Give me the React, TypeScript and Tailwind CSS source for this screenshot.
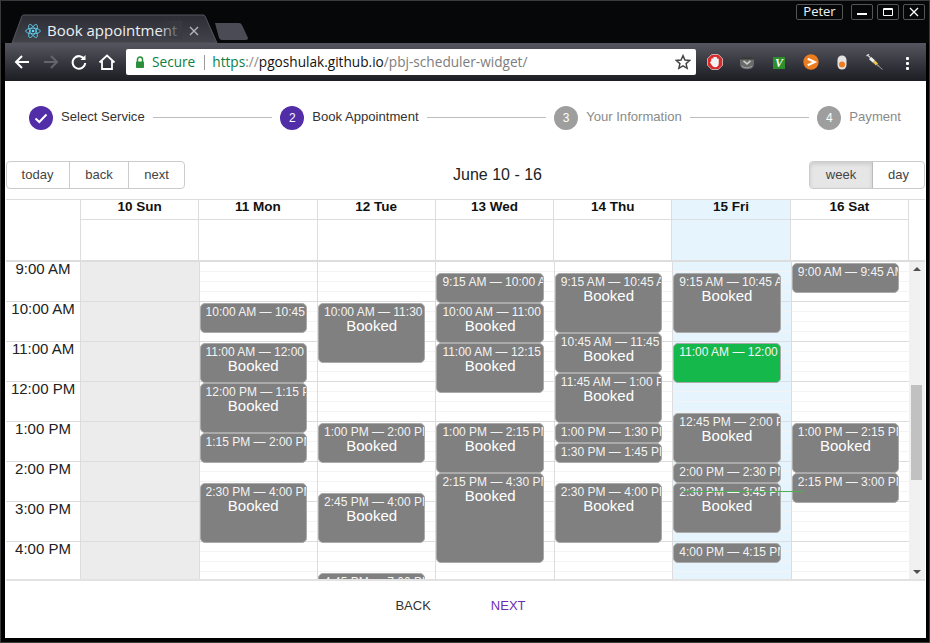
import React from "react";

type Ev = { s: number; e: number; t: string; green?: boolean };

const days: { name: string; events: Ev[]; cell: string; head: string }[] = [
  { name: "10 Sun", cell: "bg-[#ececec]", head: "", events: [] },
  {
    name: "11 Mon", cell: "", head: "",
    events: [
      { s: 10, e: 10.75, t: "10:00 AM — 10:45 AM" },
      { s: 11, e: 12, t: "11:00 AM — 12:00 PM" },
      { s: 12, e: 13.25, t: "12:00 PM — 1:15 PM" },
      { s: 13.25, e: 14, t: "1:15 PM — 2:00 PM" },
      { s: 14.5, e: 16, t: "2:30 PM — 4:00 PM" },
    ],
  },
  {
    name: "12 Tue", cell: "", head: "",
    events: [
      { s: 10, e: 11.5, t: "10:00 AM — 11:30 AM" },
      { s: 13, e: 14, t: "1:00 PM — 2:00 PM" },
      { s: 14.75, e: 16, t: "2:45 PM — 4:00 PM" },
      { s: 16.75, e: 19, t: "4:45 PM — 7:00 PM" },
    ],
  },
  {
    name: "13 Wed", cell: "", head: "",
    events: [
      { s: 9.25, e: 10, t: "9:15 AM — 10:00 AM" },
      { s: 10, e: 11, t: "10:00 AM — 11:00 AM" },
      { s: 11, e: 12.25, t: "11:00 AM — 12:15 PM" },
      { s: 13, e: 14.25, t: "1:00 PM — 2:15 PM" },
      { s: 14.25, e: 16.5, t: "2:15 PM — 4:30 PM" },
    ],
  },
  {
    name: "14 Thu", cell: "", head: "",
    events: [
      { s: 9.25, e: 10.75, t: "9:15 AM — 10:45 AM" },
      { s: 10.75, e: 11.75, t: "10:45 AM — 11:45 AM" },
      { s: 11.75, e: 13, t: "11:45 AM — 1:00 PM" },
      { s: 13, e: 13.5, t: "1:00 PM — 1:30 PM" },
      { s: 13.5, e: 14, t: "1:30 PM — 1:45 PM" },
      { s: 14.5, e: 16, t: "2:30 PM — 4:00 PM" },
    ],
  },
  {
    name: "15 Fri", cell: "bg-[#e6f4fe]", head: "bg-[#e6f4fe]",
    events: [
      { s: 9.25, e: 10.75, t: "9:15 AM — 10:45 AM" },
      { s: 11, e: 12, t: "11:00 AM — 12:00 PM", green: true },
      { s: 12.75, e: 14, t: "12:45 PM — 2:00 PM" },
      { s: 14, e: 14.5, t: "2:00 PM — 2:30 PM" },
      { s: 14.5, e: 15.75, t: "2:30 PM — 3:45 PM" },
      { s: 16, e: 16.5, t: "4:00 PM — 4:15 PM" },
    ],
  },
  {
    name: "16 Sat", cell: "", head: "",
    events: [
      { s: 9, e: 9.75, t: "9:00 AM — 9:45 AM" },
      { s: 13, e: 14.25, t: "1:00 PM — 2:15 PM" },
      { s: 14.25, e: 15, t: "2:15 PM — 3:00 PM" },
    ],
  },
];

const hours = ["9:00 AM", "10:00 AM", "11:00 AM", "12:00 PM", "1:00 PM", "2:00 PM", "3:00 PM", "4:00 PM"];

function ReactLogo() {
  return (
    <svg width="16" height="16" viewBox="-12 -12 24 24" fill="none" stroke="#61dafb" strokeWidth="1.2">
      <circle r="2" fill="#61dafb" stroke="none" />
      <ellipse rx="11" ry="4.2" />
      <ellipse rx="11" ry="4.2" transform="rotate(60)" />
      <ellipse rx="11" ry="4.2" transform="rotate(120)" />
    </svg>
  );
}

function Step({ n, label, state }: { n: string; label: string; state: "done" | "active" | "idle" }) {
  return (
    <div className="flex items-center shrink-0">
      <div
        className={
          state === "idle"
            ? "w-6 h-6 rounded-full bg-[#9e9e9e] text-white text-[12px] flex items-center justify-center"
            : "w-6 h-6 rounded-full bg-[#512da8] text-white text-[12px] flex items-center justify-center"
        }
      >
        {state === "done" ? (
          <svg width="16" height="16" viewBox="0 0 16 16" fill="none" stroke="white" strokeWidth="2">
            <path d="M2.5 8.5 L6.3 12 L13.5 4.5" />
          </svg>
        ) : (
          n
        )}
      </div>
      <span className={state === "idle" ? "ml-2 -mt-[1px] text-[13.1px] text-[#8a8a8a]" : "ml-2 -mt-[1px] text-[13.1px] text-[#333]"}>{label}</span>
    </div>
  );
}

function Line() {
  return <div className="flex-1 mx-2 h-px bg-[#bdbdbd]" />;
}

function WinBtn({ children }: { children: React.ReactNode }) {
  return (
    <div className="w-[22px] h-[16px] border border-[#555] rounded-[2px] flex items-center justify-center">{children}</div>
  );
}

function Event({ ev }: { ev: Ev }) {
  const top = (ev.s - 9) * 40 + 1;
  const height = (ev.e - ev.s) * 40;
  return (
    <div
      style={{ top, height }}
      className={
        ev.green
          ? "absolute left-0 right-[10px] z-10 overflow-hidden rounded-[5px] border border-[#aaa] bg-[#14b84b] pl-[5px] pr-0 text-center text-white"
          : "absolute left-0 right-[10px] z-10 overflow-hidden rounded-[5px] border border-[#aaa] bg-[#808080] pl-[5px] pr-0 text-center text-white"
      }
    >
      <div className="whitespace-nowrap overflow-hidden text-left text-[12px] leading-[16px] text-[#f4f4f4]">{ev.t}</div>
      {!ev.green && height >= 40 && <div className="text-[15px] leading-[12px] -ml-[5px]">Booked</div>}
    </div>
  );
}

export default function App() {
  return (
    <div className="w-[930px] h-[643px] bg-black border border-[#3a3a3a] overflow-hidden flex flex-col font-['Liberation_Sans',Arial,sans-serif]">
      {/* title bar */}
      <div className="h-[42px] shrink-0 relative bg-[#060708]">
        <svg className="absolute left-[10px] top-[13px]" width="208" height="29" viewBox="0 0 208 29">
          <defs>
            <linearGradient id="tab" x1="0" y1="0" x2="0" y2="1">
              <stop offset="0" stopColor="#2c2d35" />
              <stop offset="1" stopColor="#42434b" />
            </linearGradient>
          </defs>
          <path d="M1 29 L11 2 Q11.5 1 13 1 L192 1 Q193.5 1 194 2 L206 29 Z" fill="url(#tab)" stroke="#55565e" />
        </svg>
        <div className="absolute left-[24px] top-[20px] w-[180px] flex items-center">
          <ReactLogo />
          <div className="relative ml-[6px] mb-[2px] w-[135px] overflow-hidden whitespace-nowrap font-['Open_Sans',sans-serif] text-[15px] leading-[18px] text-[#eef0f4]">
            Book appointment
            <div className="absolute right-0 top-0 bottom-0 w-[24px] bg-gradient-to-r from-transparent to-[#393a42]" />
          </div>
          <svg className="ml-[7px]" width="10" height="10" viewBox="0 0 10 10" stroke="#b5b6bb" strokeWidth="1.4">
            <path d="M1 1 L9 9 M9 1 L1 9" />
          </svg>
        </div>
        <svg className="absolute left-[213px] top-[21px]" width="36" height="19" viewBox="0 0 36 19">
          <path d="M1 1 L25 1 Q27 1 28 3 L34 16 Q34 18 32 18 L8 18 Q6 18 5 16 Z" fill="#4a4b54" />
        </svg>
        <div className="absolute right-[4px] top-[3px] flex items-center">
          <div className="w-[47px] h-[16px] border border-[#555] rounded-[2px] flex items-center justify-center text-[#f2f2f2] font-['Open_Sans',sans-serif] text-[13px] mr-[8px]">
            Peter
          </div>
          <div className="flex gap-[4px]">
            <WinBtn>
              <div className="w-[10px] h-[2px] bg-white mt-[4px]" />
            </WinBtn>
            <WinBtn>
              <div className="w-[10px] h-[8px] border border-white border-t-2 rounded-[1px]" />
            </WinBtn>
            <WinBtn>
              <svg width="10" height="10" viewBox="0 0 10 10" stroke="white" strokeWidth="1.3">
                <path d="M1 1 L9 9 M9 1 L1 9" />
              </svg>
            </WinBtn>
          </div>
        </div>
      </div>

      <div className="ml-[4px] mr-[3px] flex-1 flex flex-col min-h-0 mb-[4px] bg-white">
        {/* toolbar */}
        <div className="h-[38px] shrink-0 flex items-center bg-gradient-to-b from-[#55565f] to-[#1d1e24]">
          <div className="flex items-center ml-[8px] w-[113px]">
            <svg width="18" height="18" viewBox="0 0 18 18" fill="none" stroke="#fff" strokeWidth="2">
              <path d="M16 9 H3 M9 3 L3 9 L9 15" />
            </svg>
            <svg className="ml-[11px]" width="18" height="18" viewBox="0 0 18 18" fill="none" stroke="#65666c" strokeWidth="2">
              <path d="M2 9 H15 M9 3 L15 9 L9 15" />
            </svg>
            <svg className="ml-[10px]" width="18" height="18" viewBox="0 0 18 18" fill="none" stroke="#fff" strokeWidth="2">
              <path d="M14.5 6.5 A6.3 6.3 0 1 0 15.2 10" />
              <path d="M15.5 2 V7 H10.5 Z" fill="#fff" stroke="none" />
            </svg>
            <svg className="ml-[10px]" width="18" height="18" viewBox="0 0 18 18" fill="none" stroke="#fff" strokeWidth="1.8">
              <path d="M1.5 9.5 L9 2.5 L16.5 9.5 M4 8 V16 H14 V8" />
            </svg>
          </div>
          <div className="w-[570px] h-[26px] bg-white rounded-[2px] flex items-center font-['Open_Sans',sans-serif] text-[13.65px] whitespace-nowrap">
            <svg className="ml-[9px]" width="10" height="13" viewBox="0 0 10 13">
              <path d="M2.5 6 V3.5 A2.5 2.5 0 0 1 7.5 3.5 V6" fill="none" stroke="#2a8f3c" strokeWidth="1.5" />
              <rect x="1" y="5.5" width="8" height="6.5" rx="0.7" fill="#2a8f3c" />
            </svg>
            <span className="ml-[7px] text-[#0b8043]">Secure</span>
            <div className="w-px h-[15px] bg-[#9a9a9a] ml-[9px] mr-[7px]" />
            <span className="text-[#0b8043]">https</span>
            <span className="text-[#8a8a8a]">://</span>
            <span className="text-[#111]">pgoshulak.github.io</span>
            <span className="text-[#7d7d7d]">/pbj-scheduler-widget/</span>
            <svg className="ml-auto mr-[5px]" width="16" height="16" viewBox="0 0 24 24" fill="none" stroke="#444" strokeWidth="2.2">
              <path d="M12 2.5 L14.9 9 L22 9.7 L16.6 14.4 L18.2 21.4 L12 17.7 L5.8 21.4 L7.4 14.4 L2 9.7 L9.1 9 Z" />
            </svg>
          </div>
          <div className="flex-1 relative h-full">
            {/* extension icons */}
            <svg className="absolute left-[11px] top-[11px]" width="16" height="16" viewBox="0 0 17 17">
              <path d="M5 0.5 H12 L16.5 5 V12 L12 16.5 H5 L0.5 12 V5 Z" fill="#d92b2b" stroke="#eee" strokeWidth="0.7" />
              <path d="M4.5 8 V5 Q5.5 4 6.7 5 V3.4 Q7.7 2.6 8.7 3.4 V3.4 Q9.7 2.6 10.6 3.6 V5 Q11.5 4.3 12.5 5 V10 Q12.3 14 8.5 14 Q6 14 4.8 11.5 L3 8.5 Q3.7 7.6 4.5 8 Z" fill="#f2f2f2" />
            </svg>
            <svg className="absolute left-[43px] top-[13px]" width="16" height="14" viewBox="0 0 18 16">
              <path d="M1 3 Q1 1 3 1 H15 Q17 1 17 3 V9 Q17 15 9 15 Q1 15 1 9 Z" fill="#6a6a6a" />
              <path d="M1 3 Q1 1 3 1 H15 Q17 1 17 3 V4 H1 Z" fill="#3a3a3a" />
              <path d="M5 5.5 L9 9 L13 5.5" fill="none" stroke="#ccc" strokeWidth="1.8" />
              <path d="M3 11.5 Q9 15.5 15 11.5" fill="none" stroke="#aaa" strokeWidth="1" />
            </svg>
            <div className="absolute left-[77px] top-[14px] w-[12px] h-[12px] bg-[#2c8f2c] flex items-center justify-center text-white text-[12px] leading-none font-bold italic font-['Liberation_Serif',serif]">
              V
            </div>
            <svg className="absolute left-[107px] top-[11px]" width="16" height="16" viewBox="0 0 17 17">
              <circle cx="8.5" cy="8.5" r="8.2" fill="#ef7b1f" />
              <path d="M5 5 L12.5 8.5 L5 12" fill="none" stroke="#fff" strokeWidth="2.2" />
            </svg>
            <svg className="absolute left-[141px] top-[12px]" width="10" height="15" viewBox="0 0 10 15">
              <rect x="0.5" y="0.5" width="9" height="14" rx="4.5" fill="#e4e4e4" />
              <circle cx="5" cy="9.5" r="3" fill="#ef7b1f" />
            </svg>
            <svg className="absolute left-[170px] top-[11px]" width="17" height="16" viewBox="0 0 17 16" fill="none">
              <path d="M0.5 2 L3 0 M1.7 1 L4 3.5" stroke="#ddd" strokeWidth="1.2" />
              <path d="M4 4 L8 7.5" stroke="#eee" strokeWidth="3" />
              <path d="M8 7.5 L11 10.5" stroke="#e8c84a" strokeWidth="3" />
              <path d="M11 10.5 L13 12.5" stroke="#999" strokeWidth="1.5" />
              <path d="M13 12.5 L16.5 15.5" stroke="#bbb" strokeWidth="0.8" />
            </svg>
            <div className="absolute left-[210px] top-[14px] flex flex-col gap-[2px]">
              <div className="w-[3px] h-[3px] bg-white rounded-[1px]" />
              <div className="w-[3px] h-[3px] bg-white rounded-[1px]" />
              <div className="w-[3px] h-[3px] bg-white rounded-[1px]" />
            </div>
          </div>
        </div>

        {/* stepper */}
        <div className="h-[72px] shrink-0 flex items-center pl-[24px] pr-[25px] pt-[1px]">
          <Step n="1" label="Select Service" state="done" />
          <Line />
          <Step n="2" label="Book Appointment" state="active" />
          <Line />
          <Step n="3" label="Your Information" state="idle" />
          <Line />
          <Step n="4" label="Payment" state="idle" />
        </div>

        {/* calendar toolbar */}
        <div className="h-[46px] shrink-0 flex items-start justify-between pl-[1px] pr-[1px] relative pt-[8px]">
          <div className="flex h-[28px] text-[13px] text-[#444] border border-[#ccc] rounded-[4px]">
            <div className="w-[63px] pr-[1px] flex items-center justify-center border-r border-[#ccc]">today</div>
            <div className="w-[59px] flex items-center justify-center border-r border-[#ccc]">back</div>
            <div className="w-[55px] flex items-center justify-center">next</div>
          </div>
          <div className="absolute left-[448px] top-[13px] text-[16px] leading-[18px] text-[#222]">June 10 - 16</div>
          <div className="flex h-[28px] text-[13px] text-[#444] border border-[#ccc] rounded-[4px]">
            <div className="w-[63px] flex items-center justify-center border-r border-[#bbb] bg-[#e6e6e6] shadow-[inset_0_2px_4px_rgba(0,0,0,0.12)] rounded-l-[3px]">week</div>
            <div className="w-[51px] flex items-center justify-center">day</div>
          </div>
        </div>

        {/* header rows */}
        <div className="ml-[1px] mr-[1px] shrink-0 border-t border-[#ddd] border-b-2 flex relative">
          <div className="w-[74px] shrink-0" />
          <div className="w-[829px] shrink-0 flex border-r border-[#ddd]">
            {days.map((d) => (
              <div key={d.name} className={"flex-1 min-w-0 border-l border-[#ddd] " + d.head}>
                <div className="h-[20px] border-b border-[#ddd] text-center text-[13.5px] leading-[14px] font-bold text-[#111]">{d.name}</div>
                <div className="h-[40px]" />
              </div>
            ))}
          </div>
        </div>

        {/* body */}
        <div className="ml-[1px] mr-[1px] h-[319px] shrink-0 flex overflow-hidden relative border-b-2 border-[#e2e2e2]">
          <div className="w-[74.1px] shrink-0">
            {hours.map((h) => (
              <div key={h} className="h-[40px] border-b border-[#ddd] text-[15px] leading-[14px] text-center text-[#222]">
                {h}
              </div>
            ))}
          </div>
          <div className="w-[829.1px] shrink-0 flex">
            {days.map((d, i) => (
              <div key={d.name} className={"flex-1 min-w-0 relative border-l border-[#ddd] " + d.cell}>
                {hours.map((h) => (
                  <div key={h} className="h-[40px] border-b border-[#ddd] flex flex-col">
                    {i === 0 ? null : (
                      <>
                        <div className="h-[10px] border-b border-[#f4f4f4]" />
                        <div className="h-[10px] border-b border-[#f4f4f4]" />
                        <div className="h-[10px] border-b border-[#f4f4f4]" />
                      </>
                    )}
                  </div>
                ))}
                {d.events.map((ev) => (
                  <Event key={ev.t} ev={ev} />
                ))}
              </div>
            ))}
          </div>
          <div className="flex-1 bg-[#f1f1f1] relative flex flex-col items-center justify-between py-[5px]">
            <div className="w-0 h-0 border-x-[4px] border-x-transparent border-b-[4px] border-b-[#505050]" />
            <div className="absolute left-[2px] right-[3px] top-[123px] h-[95px] bg-[#c1c1c1]" />
            <div className="w-0 h-0 border-x-[4px] border-x-transparent border-t-[4px] border-t-[#505050]" />
          </div>
          <div className="absolute left-[677px] top-[229px] w-[120px] h-px bg-[#4caf50] z-20" />
        </div>

        {/* footer */}
        <div className="flex-1 relative flex items-center justify-center text-[13px] pb-[7px] pr-[10px]">
          <span className="text-[#333] mr-[60px]">BACK</span>
          <span className="text-[#6a2fb5]">NEXT</span>
        </div>
      </div>
    </div>
  );
}
